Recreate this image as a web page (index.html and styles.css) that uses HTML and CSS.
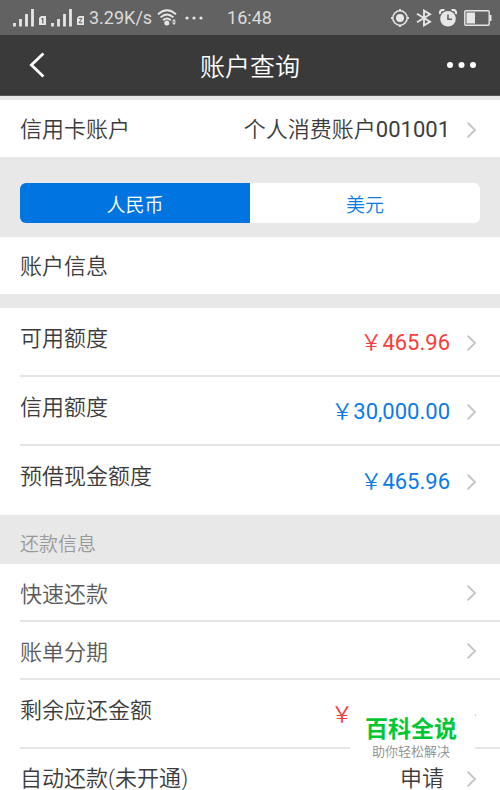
FILE: index.html
```html
<!DOCTYPE html>
<html lang="zh-CN">
<head>
    <meta charset="UTF-8">
    <meta name="viewport" content="width=device-width, initial-scale=1.0">
    <title>账户查询</title>
    <link rel="stylesheet" href="styles.css">
</head>
<body>

    <!-- Iconos compartidos -->
    <svg class="defs" width="0" height="0" aria-hidden="true">
        <symbol id="arrow" viewBox="0 0 10 16">
            <path d="M1.2 1.2 L8 8 L1.2 14.8" fill="none" stroke="#c8c8c8" stroke-width="2" stroke-linecap="round"/>
        </symbol>
        <symbol id="signal" viewBox="0 0 22 18">
            <path d="M1.5 14v3.5M7.5 10v7.5M13.5 5v12.5M19.5 0v17.5" fill="none" stroke="#e6e6e6" stroke-width="2.8"/>
        </symbol>
    </svg>

    <div class="status">
        <svg class="signal" width="22" height="18"><use href="#signal"/></svg>
        <svg class="sim" width="7" height="9" viewBox="0 0 7 9">
            <path d="M2 0h5v9H0V2z" fill="#e6e6e6"/>
            <path d="M2.4 2.6h1.4v4.8" fill="none" stroke="#626262" stroke-width="1.2"/>
        </svg>
        <svg class="signal" width="22" height="18"><use href="#signal"/></svg>
        <svg class="sim" width="7" height="9" viewBox="0 0 7 9">
            <path d="M2 0h5v9H0V2z" fill="#e6e6e6"/>
            <path d="M1.8 2.4h3.2L2 6.8h3.4" fill="none" stroke="#626262" stroke-width="1"/>
        </svg>
        <span class="speed">3.29K/s</span>
        <svg class="wifi" width="20" height="17" viewBox="0 0 20 17">
            <path d="M1 5.2Q10-2.8 19 5.2M3.6 8.4Q10 2.6 16.4 8.4M6.2 11.2Q10 7.6 13.8 11.2" fill="none" stroke="#e6e6e6" stroke-width="1.9"/>
            <circle cx="9.8" cy="14" r="2.5" fill="#e6e6e6"/>
            <path d="M15 12.4l2-2.4 2 2.4zM15 13.6h4l-2 2.4z" fill="#e6e6e6"/>
        </svg>
        <svg class="more-status" width="18" height="4" viewBox="0 0 18 4">
            <circle cx="2" cy="2" r="1.6" fill="#e6e6e6"/>
            <circle cx="9" cy="2" r="1.6" fill="#e6e6e6"/>
            <circle cx="16" cy="2" r="1.6" fill="#e6e6e6"/>
        </svg>
        <span class="time">16:48</span>
        <div class="status-right">
            <svg width="18" height="18" viewBox="0 0 18 18">
                <circle cx="9" cy="9" r="7.2" fill="none" stroke="#e6e6e6" stroke-width="1.5"/>
                <circle cx="9" cy="9" r="4" fill="#e6e6e6"/>
                <path d="M9 0v2M9 16v2M0 9h2M16 9h2" stroke="#e6e6e6" stroke-width="2"/>
            </svg>
            <svg width="16" height="18" viewBox="0 0 16 18">
                <path d="M1 4.8 L14 12.8 L8 16.4 V1.6 L14 5.2 L1 13.2" fill="none" stroke="#e6e6e6" stroke-width="1.9"/>
            </svg>
            <svg width="18" height="18" viewBox="0 0 18 18">
                <circle cx="9" cy="9.8" r="7.8" fill="#e6e6e6"/>
                <path d="M1 5 A3.2 3.2 0 0 1 5.4 1.2M12.6 1.2 A3.2 3.2 0 0 1 17 5" fill="none" stroke="#e6e6e6" stroke-width="2.2"/>
                <path d="M9 5.5v4.8h4" fill="none" stroke="#626262" stroke-width="1.6"/>
            </svg>
            <svg width="28" height="16" viewBox="0 0 28 16">
                <rect x="0.8" y="0.8" width="24.4" height="14.4" rx="1" fill="none" stroke="#e6e6e6" stroke-width="1.4"/>
                <rect x="2.5" y="2.5" width="8.5" height="11" fill="#e6e6e6"/>
                <rect x="25.5" y="5" width="2" height="6" fill="#e6e6e6"/>
            </svg>
        </div>
    </div>

    <header class="header">
        <button class="icon-btn" type="button" aria-label="返回">
            <svg width="16" height="26" viewBox="0 0 16 26">
                <path d="M14.4 1.5 L2.4 13 L14.4 24.5" fill="none" stroke="#fff" stroke-width="2.8"/>
            </svg>
        </button>
        <h1>账户查询</h1>
        <button class="icon-btn right" type="button" aria-label="更多">
            <svg width="30" height="6" viewBox="0 0 30 6">
                <circle cx="4" cy="3" r="3" fill="#fff"/>
                <circle cx="15.5" cy="3" r="3" fill="#fff"/>
                <circle cx="27" cy="3" r="3" fill="#fff"/>
            </svg>
        </button>
    </header>

    <main>
        <a class="row account" href="#">
            <span class="label">信用卡账户</span>
            <span class="value">个人消费账户<span class="num">001001</span></span>
            <svg class="arrow" width="10" height="16"><use href="#arrow"/></svg>
        </a>

        <div class="tabs">
            <button class="tab active" type="button">人民币</button>
            <button class="tab" type="button">美元</button>
        </div>

        <h2 class="row title">账户信息</h2>

        <div class="list">
            <a class="row tall" href="#">
                <span class="label">可用额度</span>
                <span class="value red">￥<span class="num">465.96</span></span>
                <svg class="arrow" width="10" height="16"><use href="#arrow"/></svg>
            </a>
            <a class="row tall" href="#">
                <span class="label">信用额度</span>
                <span class="value blue">￥<span class="num">30,000.00</span></span>
                <svg class="arrow" width="10" height="16"><use href="#arrow"/></svg>
            </a>
            <a class="row tall" href="#">
                <span class="label">预借现金额度</span>
                <span class="value blue">￥<span class="num">465.96</span></span>
                <svg class="arrow" width="10" height="16"><use href="#arrow"/></svg>
            </a>
        </div>

        <h3 class="group">还款信息</h3>

        <div class="list">
            <a class="row soft" href="#">
                <span class="label">快速还款</span>
                <svg class="arrow" width="10" height="16"><use href="#arrow"/></svg>
            </a>
            <a class="row soft" href="#">
                <span class="label">账单分期</span>
                <svg class="arrow" width="10" height="16"><use href="#arrow"/></svg>
            </a>
            <a class="row tall" href="#">
                <span class="label">剩余应还金额</span>
                <span class="value red hidden-amount">￥</span>
                <svg class="arrow" width="10" height="16"><use href="#arrow"/></svg>
                <span class="mark">
                    <strong>百科全说</strong>
                    <small>助你轻松解决</small>
                </span>
            </a>
            <a class="row last" href="#">
                <span class="label">自动还款(未开通)</span>
                <span class="value apply">申请</span>
                <svg class="arrow" width="10" height="16"><use href="#arrow"/></svg>
            </a>
        </div>
    </main>

</body>
</html>
```
FILE: styles.css
```css
* {
    box-sizing: border-box;
}

body {
    font-family: Roboto, "Noto Sans CJK SC", sans-serif;
    font-size: 22px;
    font-weight: 350;
    background-color: #e8e8e8;
    color: #3c3c3c;
    margin: 0;
    height: 100vh;
    overflow: hidden;
}

svg {
    display: block;
    flex: none;
}

.defs {
    position: absolute;
}

button {
    font: inherit;
    border: none;
    padding: 0;
    cursor: pointer;
}

.status {
    display: flex;
    align-items: center;
    height: 35px;
    padding: 0 8px 0 13px;
    background-color: #626262;
    color: #dcdcdc;
    font-size: 18px;
    font-weight: 400;
}

.sim {
    align-self: flex-end;
    margin: 0 5px 10px 4px;
}

.speed {
    margin-right: 5px;
}

.more-status {
    margin-left: 8px;
}

.time {
    margin-left: 24px;
}

.status-right {
    display: flex;
    align-items: center;
    gap: 7px;
    margin-left: auto;
}

.header {
    display: grid;
    grid-template-columns: 1fr auto 1fr;
    align-items: center;
    height: 61px;
    padding: 0 24px;
    background-color: #3a3a3a;
    border-bottom: 1px solid #5a5a5a;
    color: #fff;
}

.header h1 {
    margin: 0;
    font-size: 25px;
    font-weight: inherit;
}

.icon-btn {
    justify-self: start;
    padding-left: 5px;
    background: none;
}

.icon-btn.right {
    justify-self: end;
}

.row {
    position: relative;
    display: flex;
    align-items: center;
    height: 57px;
    margin: 0;
    padding: 2px 23px 0 20px;
    background-color: #fff;
    color: #3c3c3c;
    font-size: 22px;
    font-weight: inherit;
    line-height: 30px;
    text-decoration: none;
}

.account {
    margin-top: 4px;
}

.value {
    margin-left: auto;
}

.arrow {
    margin-left: auto;
}

.value + .arrow {
    margin-left: 17px;
}

.num {
    font-weight: 400;
}

.red {
    color: #ff3b3b;
}

.blue {
    color: #0b7be6;
}

.tabs {
    display: flex;
    height: 40px;
    margin: 26px 20px 14px;
    border-radius: 6px;
    overflow: hidden;
}

.tab {
    flex: 1;
    background-color: #fff;
    color: #0b7be6;
    font-size: 19px;
}

.tab.active {
    background-color: #0075e2;
    color: #fff;
}

.title {
    margin-bottom: 14px;
}

.list {
    background-color: #fff;
}

.list .row {
    height: 58px;
    margin-left: 20px;
    padding-left: 0;
    border-bottom: 2px solid #e6e6e6;
}

.list .tall {
    height: 69px;
}

.list .row:last-child {
    border-bottom: none;
}

.list .last {
    height: 58px;
    line-height: 20px;
}

.tall .label {
    align-self: flex-start;
    padding-top: 14px;
}

.list .soft {
    color: #5a5a5a;
}

.soft .label {
    padding-top: 4px;
}

.group {
    margin: 0;
    padding: 5px 20px 0;
    color: #999;
    font-size: 19px;
    font-weight: inherit;
    line-height: 50px;
    height: 49px;
}

.hidden-amount {
    width: 119px;
}

.apply {
    margin-right: 6px;
}

/* sello encima de la lista */
.mark {
    position: absolute;
    right: 25px;
    top: 24px;
    z-index: 1;
    display: flex;
    flex-direction: column;
    align-items: center;
    width: 125px;
    padding: 12px 3px 4px 0;
    background-color: #fff;
}

.mark strong {
    color: #00c832;
    font-size: 23px;
    line-height: 28px;
    font-weight: 700;
}

.mark small {
    color: #8c8c8c;
    font-size: 13px;
    line-height: 16px;
}
```
